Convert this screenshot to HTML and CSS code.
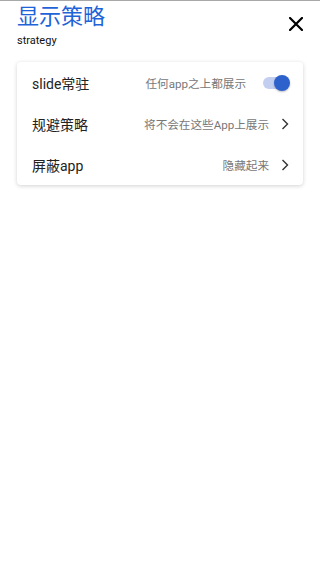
FILE: index.html
```html
<!DOCTYPE html>
<html lang="zh-CN">
<head>
    <meta charset="UTF-8">
    <meta name="viewport" content="width=device-width, initial-scale=1.0">
    <title>显示策略</title>
    <link rel="stylesheet" href="styles.css">
</head>
<body>
    <div class="header">
        <div class="titles">
            <h1 class="title">显示策略</h1>
            <div class="subtitle">strategy</div>
        </div>
        <button class="close-btn" aria-label="close">
            <svg width="14" height="14" viewBox="0 0 14 14"><path d="M1 1L13 13M13 1L1 13" stroke="#000" stroke-width="2.2" stroke-linecap="square"/></svg>
        </button>
    </div>

    <div class="card">
        <div class="row">
            <span class="label">slide常驻</span>
            <span class="value">任何app之上都展示</span>
            <span class="switch on"><span class="knob"></span></span>
        </div>
        <div class="row">
            <span class="label">规避策略</span>
            <span class="value">将不会在这些App上展示</span>
            <svg class="chevron" width="8" height="12" viewBox="0 0 8 12"><path d="M1.5 1L6.5 6L1.5 11" fill="none" stroke="#333" stroke-width="1.4"/></svg>
        </div>
        <div class="row">
            <span class="label">屏蔽app</span>
            <span class="value">隐藏起来</span>
            <svg class="chevron" width="8" height="12" viewBox="0 0 8 12"><path d="M1.5 1L6.5 6L1.5 11" fill="none" stroke="#333" stroke-width="1.4"/></svg>
        </div>
    </div>
</body>
</html>
```

FILE: styles.css
```css
body {
    margin: 0;
    font-family: Roboto, "Noto Sans CJK SC", sans-serif;
    background-color: #fff;
    border-top: 1px solid #a8a8a8;
    height: 579px;
    overflow: hidden;
}

.header {
    display: flex;
    justify-content: space-between;
    align-items: flex-start;
    padding: 1px 17px 0 17px;
}

.title {
    margin: 0;
    font-size: 22px;
    font-weight: normal;
    line-height: 30px;
    color: #1f63d8;
}

.subtitle {
    margin-top: 2px;
    font-size: 11px;
    line-height: 14px;
    color: #111;
}

.close-btn {
    margin-top: 15px;
    margin-right: 0;
    padding: 0;
    border: none;
    background: none;
    line-height: 0;
}

.card {
    margin: 14px 17px 0 17px;
    background-color: #fff;
    border-radius: 4px;
    box-shadow: 0 1px 4px rgba(0, 0, 0, 0.18);
}

.row {
    display: flex;
    align-items: center;
    height: 41px;
    padding: 0 14px 0 15px;
}

.label {
    flex: 1;
    font-size: 14px;
    color: #222;
}

.value {
    font-size: 11.6px;
    color: #777;
}

.chevron {
    margin-left: 12px;
}

.switch {
    position: relative;
    width: 26px;
    height: 12px;
    margin-left: 17px;
    border-radius: 6px;
    background-color: #c3cff0;
}

.switch .knob {
    position: absolute;
    top: -2px;
    right: -1px;
    width: 16px;
    height: 16px;
    border-radius: 50%;
    background-color: #2d62cd;
    box-shadow: 0 1px 2px rgba(0, 0, 0, 0.25);
}
```
